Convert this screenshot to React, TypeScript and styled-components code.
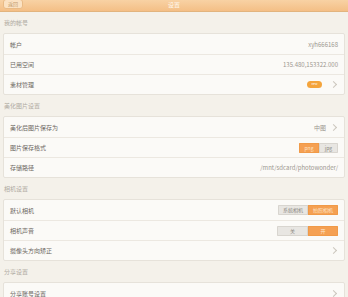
import React from "react";
import styled, { createGlobalStyle } from "styled-components";

const Global = createGlobalStyle`
  html, body { margin: 0; padding: 0; }
  body {
    background: #f4f1ea;
    font-family: "Noto Sans CJK SC", "Noto Sans", sans-serif;
    width: 348px;
    height: 297px;
    overflow: hidden;
  }
`;

const Page = styled.div`
  width: 348px;
  display: flex;
  flex-direction: column;
`;

const Header = styled.div`
  height: 11px;
  border-bottom: 1px solid #e2b47e;
  background: linear-gradient(#f8d2a4, #f4bf86);
  display: flex;
  align-items: center;
  justify-content: center;
  position: relative;
`;

const Title = styled.span`
  font-size: 6px;
  line-height: 6px;
  color: #fff8ee;
  margin-top: -2px;
`;

const Back = styled.button`
  position: absolute;
  left: 3px;
  top: -1px;
  width: 20px;
  height: 10px;
  padding: 0;
  border: 1px solid #e9bb86;
  border-radius: 3px;
  background: #fbe2c3;
  font-family: inherit;
  font-size: 5px;
  line-height: 8px;
  color: #c19a6e;
`;

const SectionLabel = styled.div`
  height: 21px;
  display: flex;
  align-items: center;
  padding-left: 4px;
  font-size: 6px;
  color: #b0aba2;
`;

const Card = styled.div`
  margin: 0 3px;
  background: #fbfaf7;
  border: 1px solid #e6e2da;
  border-radius: 2px;
`;

const Row = styled.div`
  height: 20px;
  box-sizing: border-box;
  display: flex;
  align-items: center;
  padding: 0 6px 0 6px;
  & + & { border-top: 1px solid #ece8e1; }
`;

const RowLabel = styled.span`
  flex: 1;
  font-size: 6px;
  color: #6c675f;
`;

const Value = styled.span`
  font-size: 6px;
  color: #9c978f;
`;

const Badge = styled.span`
  width: 15px;
  height: 7px;
  border-radius: 4px;
  background: #f4a43c;
  color: #fff;
  font-size: 3px;
  line-height: 7px;
  text-align: center;
  margin-right: 4px;
`;

const Chevron = styled.span`
  width: 4px;
  height: 4px;
  border-top: 1px solid #cbc6be;
  border-right: 1px solid #cbc6be;
  transform: rotate(45deg);
  margin-left: 5px;
  margin-right: 2px;
`;

const Seg = styled.div`
  display: flex;
  border-radius: 1px;
  overflow: hidden;
`;

const SegItem = styled.span<{ $on?: boolean; $w: number }>`
  width: ${(p) => p.$w}px;
  height: 10px;
  box-sizing: border-box;
  font-size: 5px;
  line-height: 8px;
  text-align: center;
  background: ${(p) => (p.$on ? "#f5a052" : "#e8e6e2")};
  color: ${(p) => (p.$on ? "#fde6cc" : "#8a8680")};
  border: 1px solid ${(p) => (p.$on ? "#f09a48" : "#d8d5cf")};
`;

export default function App() {
  return (
    <Page>
      <Global />
      <Header>
        <Back>返回</Back>
        <Title>设置</Title>
      </Header>

      <SectionLabel>我的帐号</SectionLabel>
      <Card>
        <Row>
          <RowLabel>帐户</RowLabel>
          <Value>xyh666168</Value>
        </Row>
        <Row>
          <RowLabel>已用空间</RowLabel>
          <Value>135.480,153322.000</Value>
        </Row>
        <Row>
          <RowLabel>素材管理</RowLabel>
          <Badge>new</Badge>
          <Chevron />
        </Row>
      </Card>

      <SectionLabel>美化图片设置</SectionLabel>
      <Card>
        <Row>
          <RowLabel>美化后图片保存为</RowLabel>
          <Value>中图</Value>
          <Chevron />
        </Row>
        <Row>
          <RowLabel>图片保存格式</RowLabel>
          <Seg>
            <SegItem $on $w={20}>png</SegItem>
            <SegItem $w={19}>jpg</SegItem>
          </Seg>
        </Row>
        <Row>
          <RowLabel>存储路径</RowLabel>
          <Value>/mnt/sdcard/photowonder/</Value>
        </Row>
      </Card>

      <SectionLabel>相机设置</SectionLabel>
      <Card>
        <Row>
          <RowLabel>默认相机</RowLabel>
          <Seg>
            <SegItem $w={30}>系统相机</SegItem>
            <SegItem $on $w={30}>拍照相机</SegItem>
          </Seg>
        </Row>
        <Row>
          <RowLabel>相机声音</RowLabel>
          <Seg>
            <SegItem $w={31}>关</SegItem>
            <SegItem $on $w={30}>开</SegItem>
          </Seg>
        </Row>
        <Row>
          <RowLabel>摄像头方向矫正</RowLabel>
          <Chevron />
        </Row>
      </Card>

      <SectionLabel>分享设置</SectionLabel>
      <Card>
        <Row>
          <RowLabel>分享账号设置</RowLabel>
          <Chevron />
        </Row>
      </Card>
    </Page>
  );
}
